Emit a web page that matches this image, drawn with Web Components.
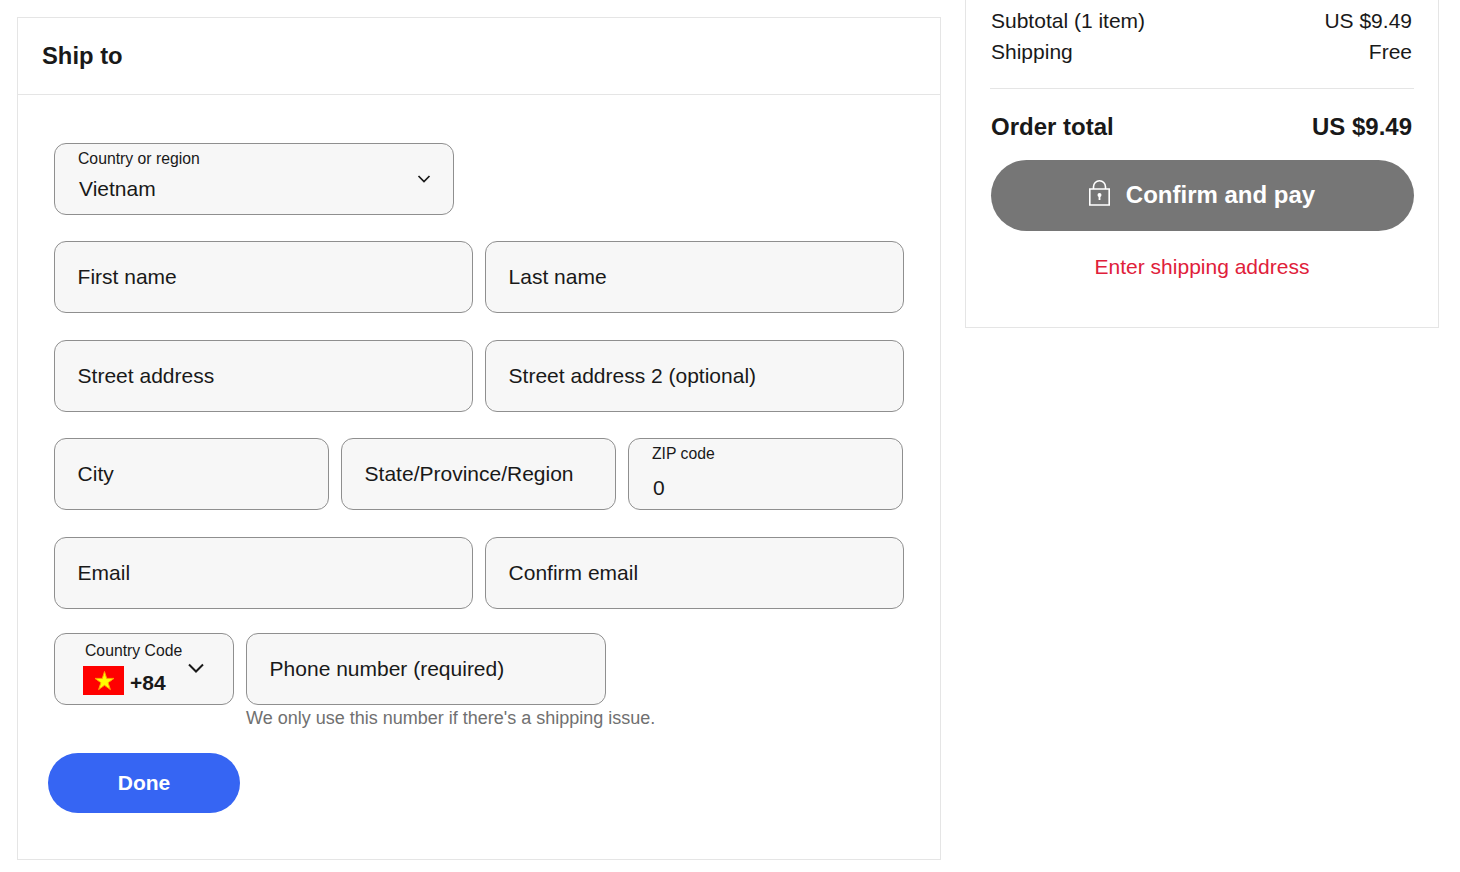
<!DOCTYPE html>
<html>
<head>
<meta charset="utf-8">
<title>Checkout</title>
<style>
    html, body { margin: 0; height: 872px; overflow: hidden; background: #fff; }
    body { font-family: "Liberation Sans", Arial, sans-serif; color: #191919; }
</style>
</head>
<body>
<checkout-page>
    <ship-card>
        <form-row style="--gap: 0">
            <text-field label="Country or region" value="Vietnam" chevron style="flex: 0 0 400px; --value-x: 24px; --value-gap: 7px"></text-field>
        </form-row>
        <form-row style="--gap: 26px">
            <text-field label="First name"></text-field>
            <text-field label="Last name"></text-field>
        </form-row>
        <form-row style="--gap: 27px">
            <text-field label="Street address"></text-field>
            <text-field label="Street address 2 (optional)"></text-field>
        </form-row>
        <form-row style="--gap: 26px; --width: 849px">
            <text-field label="City"></text-field>
            <text-field label="State/Province/Region"></text-field>
            <text-field label="ZIP code" value="0" style="--value-x: 24px; --value-gap: 11px"></text-field>
        </form-row>
        <form-row style="--gap: 27px">
            <text-field label="Email"></text-field>
            <text-field label="Confirm email"></text-field>
        </form-row>
        <phone-row style="--gap: 24px"></phone-row>
        <pill-button slot="action" color="#3665f3" width="192" height="60" size="21">Done</pill-button>
    </ship-card>
    <order-summary></order-summary>
</checkout-page>

<script>
class CheckoutPage extends HTMLElement {
    constructor() {
        super();
        this.attachShadow({ mode: 'open' });
        this.shadowRoot.innerHTML = `
            <style>
                :host {
                    display: flex;
                    align-items: flex-start;
                    gap: 24px;
                    padding-left: 17px;
                }
            </style>
            <slot></slot>
        `;
    }
}

class ShipCard extends HTMLElement {
    constructor() {
        super();
        this.attachShadow({ mode: 'open' });
        this.shadowRoot.innerHTML = `
            <style>
                :host {
                    display: block;
                    box-sizing: border-box;
                    width: 924px;
                    height: 843px;
                    margin-top: 17px;
                    border: 1px solid #e5e5e5;
                }
                h2 {
                    box-sizing: border-box;
                    height: 77px;
                    margin: 0;
                    padding: 23px 24px 0;
                    font-size: 23.8px;
                    line-height: 29px;
                    font-weight: 700;
                    border-bottom: 1px solid #e5e5e5;
                }
                .fields {
                    display: flex;
                    flex-direction: column;
                    padding: 48px 36px 0;
                }
                .action {
                    display: block;
                    margin: 24px 0 0 30px;
                }
            </style>
            <h2>Ship to</h2>
            <div class="fields"><slot></slot></div>
            <div class="action"><slot name="action"></slot></div>
        `;
    }
}

class FormRow extends HTMLElement {
    constructor() {
        super();
        this.attachShadow({ mode: 'open' });
        this.shadowRoot.innerHTML = `
            <style>
                :host {
                    display: flex;
                    gap: 12px;
                    width: var(--width, 850px);
                    margin-top: var(--gap, 0);
                }
                ::slotted(text-field) { flex: 1 1 0; }
            </style>
            <slot></slot>
        `;
    }
}

class TextField extends HTMLElement {
    constructor() {
        super();
        this.attachShadow({ mode: 'open' });
    }

    connectedCallback() {
        const label = this.getAttribute('label');
        const value = this.getAttribute('value');
        const chevron = this.hasAttribute('chevron');
        this.shadowRoot.innerHTML = `
            <style>
                :host {
                    display: block;
                    box-sizing: border-box;
                    position: relative;
                    height: 72px;
                    background: #f7f7f7;
                    border: 1px solid #8f8f8f;
                    border-radius: 12px;
                    color: #191919;
                    font-size: 21px;
                }
                .placeholder {
                    display: flex;
                    align-items: center;
                    height: 100%;
                    padding-left: 22.6px;
                }
                .filled { padding: 5px 23px 0; }
                .small { font-size: 15.75px; line-height: 20px; }
                .value {
                    margin-top: var(--value-gap, 8px);
                    margin-left: calc(var(--value-x, 23px) - 23px);
                    line-height: 26px;
                }
                svg { position: absolute; right: 22px; top: 30px; }
            </style>
            ${value === null
                ? `<div class="placeholder">${label}</div>`
                : `<div class="filled"><div class="small">${label}</div><div class="value">${value}</div></div>`}
            ${chevron ? `<svg width="14" height="10" viewBox="0 0 14 10"><path d="M1.5 2 7 7.5 12.5 2" fill="none" stroke="#191919" stroke-width="1.7"/></svg>` : ''}
        `;
    }
}

class PhoneRow extends HTMLElement {
    constructor() {
        super();
        this.attachShadow({ mode: 'open' });
        this.shadowRoot.innerHTML = `
            <style>
                :host {
                    display: flex;
                    gap: 12px;
                    margin-top: var(--gap, 0);
                }
                .code {
                    box-sizing: border-box;
                    position: relative;
                    width: 180px;
                    height: 72px;
                    background: #f7f7f7;
                    border: 1px solid #8f8f8f;
                    border-radius: 12px;
                }
                .code-label {
                    padding: 7px 0 0 30px;
                    font-size: 15.75px;
                    line-height: 20px;
                }
                .flag-line {
                    display: flex;
                    align-items: flex-start;
                    gap: 6px;
                    padding: 5px 0 0 28px;
                    font-size: 21px;
                    font-weight: 700;
                    line-height: 29px;
                }
                .flag-line span { margin-top: 2px; }
                .code > svg { position: absolute; right: 28px; top: 28px; }
                .number { width: 360px; }
                text-field { height: 72px; }
                .hint {
                    margin-top: 2px;
                    font-size: 18px;
                    line-height: 22px;
                    color: #707070;
                    white-space: nowrap;
                }
            </style>
            <div class="code">
                <div class="code-label">Country Code</div>
                <div class="flag-line">
                    <svg width="41" height="29" viewBox="0 0 41 29">
                        <rect width="41" height="29" fill="#f00"/>
                        <polygon fill="#ff0" stroke="#ffa000" stroke-width="1" points="21.5,5.5 23.7,12.4 31,12.4 25.1,16.7 27.4,23.6 21.5,19.3 15.6,23.6 17.9,16.7 12,12.4 19.3,12.4"/>
                    </svg>
                    <span>+84</span>
                </div>
                <svg width="18" height="12" viewBox="0 0 18 12"><path d="M2 2.5 9 9.5 16 2.5" fill="none" stroke="#191919" stroke-width="2"/></svg>
            </div>
            <div class="number">
                <text-field label="Phone number (required)"></text-field>
                <div class="hint">We only use this number if there's a shipping issue.</div>
            </div>
        `;
    }
}

class PillButton extends HTMLElement {
    constructor() {
        super();
        this.attachShadow({ mode: 'open' });
    }

    connectedCallback() {
        this.shadowRoot.innerHTML = `
            <style>
                :host {
                    display: flex;
                    align-items: center;
                    justify-content: center;
                    gap: 16px;
                    box-sizing: border-box;
                    width: ${this.getAttribute('width')}px;
                    height: ${this.getAttribute('height')}px;
                    border-radius: 40px;
                    background: ${this.getAttribute('color')};
                    color: #fff;
                    font-size: ${this.getAttribute('size')}px;
                    font-weight: 700;
                }
            </style>
            <slot name="icon"></slot>
            <slot></slot>
        `;
    }
}

class OrderSummary extends HTMLElement {
    constructor() {
        super();
        this.attachShadow({ mode: 'open' });
        this.shadowRoot.innerHTML = `
            <style>
                :host {
                    display: block;
                    box-sizing: border-box;
                    width: 474px;
                    height: 328px;
                    padding: 5px 24px 0;
                    border: 1px solid #e5e5e5;
                    border-top: 0;
                    font-size: 21px;
                }
                .line {
                    display: flex;
                    justify-content: space-between;
                    padding: 0 2px 0 1px;
                    line-height: 31px;
                }
                hr {
                    height: 1px;
                    margin: 21px 0 0;
                    border: 0;
                    background: #e5e5e5;
                }
                .total {
                    margin-top: 22px;
                    margin-bottom: 17.5px;
                    font-size: 24px;
                    font-weight: 700;
                }
                .error {
                    margin-top: 23.5px;
                    text-align: center;
                    line-height: 26px;
                    color: #e0203a;
                }
                pill-button { margin-left: .5px; }
                svg { margin-bottom: 5px; }
            </style>
            <div class="line"><span>Subtotal (1 item)</span><span>US $9.49</span></div>
            <div class="line"><span>Shipping</span><span>Free</span></div>
            <hr>
            <div class="line total"><span>Order total</span><span>US $9.49</span></div>
            <pill-button color="#767676" width="423" height="71" size="24">
                <svg slot="icon" width="21" height="26" viewBox="0 0 21 26">
                    <path d="M.8 9h19.4v16H.8z" fill="none" stroke="#fff" stroke-width="1.6"/>
                    <path d="M4.5 9V6.8a6 6 0 0 1 12 0V9" fill="none" stroke="#fff" stroke-width="1.6"/>
                    <circle cx="10.5" cy="15" r="2" fill="#fff"/>
                    <rect x="9.6" y="15" width="1.8" height="5" fill="#fff"/>
                </svg>
                Confirm and pay
            </pill-button>
            <div class="error">Enter shipping address</div>
        `;
    }
}

customElements.define('text-field', TextField);
customElements.define('form-row', FormRow);
customElements.define('phone-row', PhoneRow);
customElements.define('pill-button', PillButton);
customElements.define('ship-card', ShipCard);
customElements.define('order-summary', OrderSummary);
customElements.define('checkout-page', CheckoutPage);
</script>
</body>
</html>
